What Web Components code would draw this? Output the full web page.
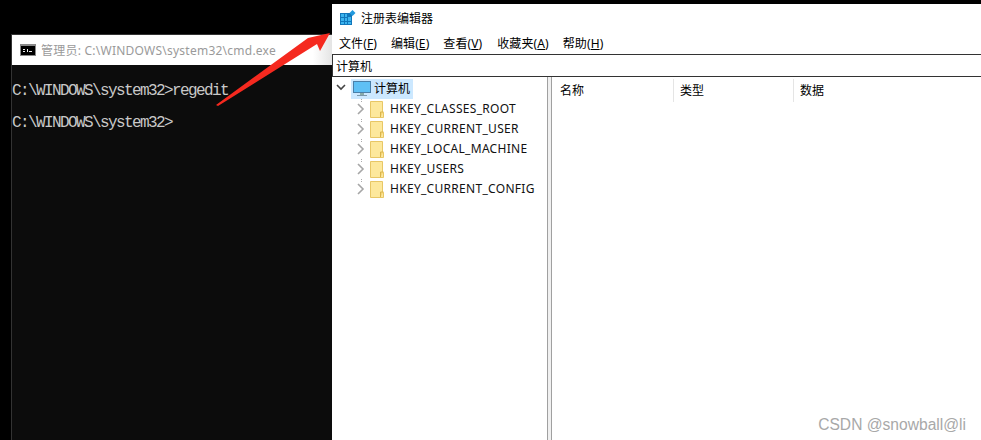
<!DOCTYPE html>
<html>
<head>
<meta charset="utf-8">
<title>regedit</title>
<style>
  html, body { margin: 0; padding: 0; height: 100%; background: #000; overflow: hidden; }
</style>
</head>
<body>
<screen-shot>
  <cmd-window slot="cmd" title-text="管理员: C:\WINDOWS\system32\cmd.exe">
    <div>C:\WINDOWS\system32&gt;regedit</div>
    <div>&nbsp;</div>
    <div>C:\WINDOWS\system32&gt;</div>
  </cmd-window>
  <reg-window slot="reg">
    <reg-key slot="keys">HKEY_CLASSES_ROOT</reg-key>
    <reg-key slot="keys">HKEY_CURRENT_USER</reg-key>
    <reg-key slot="keys">HKEY_LOCAL_MACHINE</reg-key>
    <reg-key slot="keys">HKEY_USERS</reg-key>
    <reg-key slot="keys">HKEY_CURRENT_CONFIG</reg-key>
  </reg-window>
</screen-shot>

<script>
const define = (name, html, setup) => {
  customElements.define(name, class extends HTMLElement {
    constructor () {
      super()
      this.attachShadow({ mode: 'open' }).innerHTML = html
      if (setup) setup(this)
    }
  })
}

define('screen-shot', `
  <style>
    :host { display: flex; width: 981px; height: 440px; position: relative; overflow: hidden; background: #000; }
    .arrow { position: absolute; left: 0; top: 0; }
    .mark { position: absolute; right: 15px; bottom: 6px; font: 15.6px "Liberation Sans", sans-serif; color: #a8a8a8; }
  </style>
  <slot name="cmd"></slot>
  <slot name="reg"></slot>
  <svg class="arrow" width="981" height="440">
    <polygon points="330,33 320,51 317,44 218,106 216,105 308,38" fill="#f5291f"/>
  </svg>
  <div class="mark">CSDN @snowball@li</div>
`)

define('cmd-window', `
  <style>
    :host { display: flex; flex-direction: column; margin: 34px 0 0 11px; border-left: 1px solid #333; border-top: 1px solid #333; box-sizing: border-box; width: 321px; }
    .title { height: 30px; flex: none; display: flex; align-items: center; gap: 5px; padding-left: 8px; background: linear-gradient(to right, #fff 94%, #e4e4e4); font: 12px "Noto Sans", "Noto Sans CJK SC", sans-serif; letter-spacing: 0.24px; color: #9a9a9a; }
    .body { flex: 1; background: #0c0c0c; color: #c8c8c8; font: 16px/16px "Liberation Mono", monospace; letter-spacing: -1.6px; padding-top: 18px; }
    svg { flex: none; }
  </style>
  <div class="title">
    <svg width="16" height="12" viewBox="0 0 16 12">
      <rect width="16" height="12" fill="#8a8a8a"/>
      <rect x="1" y="2" width="14" height="9" fill="#000"/>
      <path d="M3 5h2v1H3zM3 7h2v1H3zM7 5h1v3H7zM9 7h3v1H9z" fill="#eee"/>
    </svg>
    <span id="t"></span>
  </div>
  <div class="body"><slot></slot></div>
`, el => {
  el.shadowRoot.getElementById('t').textContent = el.getAttribute('title-text')
})

define('reg-window', `
  <style>
    :host { display: flex; flex-direction: column; flex: 1; margin-top: 4px; background: #fff; color: #000; font: 12px "Noto Sans", "Noto Sans CJK SC", sans-serif; }
    .title { height: 27px; flex: none; display: flex; align-items: center; gap: 5px; padding-left: 8px; }
    .menu { height: 23px; flex: none; display: flex; align-items: center; padding-left: 7px; gap: 14px; letter-spacing: 0.1px; }
    .menu span:nth-child(4) { margin-left: 1px; }
    .addr { height: 21px; flex: none; border: solid #333; border-width: 1px 0 1px 1px; display: flex; align-items: center; padding-left: 3px; }
    .panes { flex: 1; display: flex; min-height: 0; }
    .tree { width: 214px; flex: none; padding: 2px 0 0 1px; box-sizing: border-box; margin-left: 1px; }
    .split { width: 5px; flex: none; box-sizing: border-box; border: solid #a0a0a0; border-width: 0 1px; background: #f0f0f0; }
    .list { flex: 1; display: flex; height: 24px; align-items: stretch; }
    .col { width: 120px; box-sizing: border-box; padding-left: 6px; line-height: 28px; position: relative; }
    .col:first-child { width: 122px; padding-left: 8px; }
    .col:not(:last-child)::after { content: ""; position: absolute; right: 0; top: 2px; height: 23px; width: 1px; background: #e5e5e5; }
    .root { display: flex; align-items: center; height: 20px; }
    .root svg { flex: none; }
    .sel { display: flex; align-items: center; gap: 3px; background: #cce8ff; height: 20px; padding: 0 3px 0 2px; margin-left: 1px; }
    .sel span { padding-bottom: 2px; }
    u { text-underline-offset: 1px; }
  </style>
  <div class="title">
    <svg width="16" height="15" viewBox="0 0 16 15">
      <path d="M0 3h12v12H0z" fill="#1177bb"/>
      <path d="M1 4h3v3H1zM5 4h2v3H5zM8 7h3v1H8zM1 8h3v3H1zM5 8h2v3H5zM8 8h3v3H8zM1 12h3v2H1zM5 12h2v2H5zM8 12h3v2H8z" fill="#3cb4ee"/>
      <path d="M12.5 0l3 3-3 3-3-3z" fill="#2299dd"/>
    </svg>
    <span>注册表编辑器</span>
  </div>
  <div class="menu">
    <span>文件(<u>F</u>)</span><span>编辑(<u>E</u>)</span><span>查看(<u>V</u>)</span><span>收藏夹(<u>A</u>)</span><span>帮助(<u>H</u>)</span>
  </div>
  <div class="addr">计算机</div>
  <div class="panes">
    <div class="tree">
      <div class="root">
        <svg width="16" height="12" viewBox="0 0 16 12"><path d="M3 2l4 4 4-4" fill="none" stroke="#444" stroke-width="1.6"/></svg>
        <div class="sel">
          <svg width="18" height="16" viewBox="0 0 18 16">
            <rect x="0.5" y="0.5" width="17" height="11" fill="#5fc0f5" stroke="#4a7fa8"/>
            <rect x="7" y="12" width="4" height="2" fill="#8aa"/>
            <rect x="4" y="14" width="10" height="1" fill="#7a98aa"/>
          </svg>
          <span>计算机</span>
        </div>
      </div>
      <slot name="keys"></slot>
    </div>
    <div class="split"></div>
    <div class="list">
      <div class="col">名称</div>
      <div class="col">类型</div>
      <div class="col">数据</div>
    </div>
  </div>
`)

define('reg-key', `
  <style>
    :host {
      display: flex; align-items: center; height: 20px; padding-left: 22px; gap: 5px;
      font-family: "Noto Sans", "Noto Sans CJK SC", sans-serif; font-size: 12px; letter-spacing: 0.3px; color: #111; white-space: nowrap;
      background: linear-gradient(#aaa, #aaa) 27px 0 / 1px 1px no-repeat, linear-gradient(#aaa, #aaa) 27px 2px / 1px 1px no-repeat;
    }
    svg { flex: none; }
    .folder { margin-top: 1px; }
    span { margin-left: 1px; padding-bottom: 2px; }
  </style>
  <svg width="9" height="12" viewBox="0 0 9 12"><path d="M2 1l5 5-5 5" fill="none" stroke="#a6a6a6" stroke-width="1.6"/></svg>
  <svg class="folder" width="14" height="17" viewBox="0 0 14 17">
    <path d="M0.5 0.5h12v11h1v5h-13z" fill="#fde89c" stroke="#e8c766"/>
    <path d="M10.5 16v-5h3" fill="#f6d777" stroke="#d9b44e"/>
  </svg>
  <span><slot></slot></span>
`)
</script>
</body>
</html>
